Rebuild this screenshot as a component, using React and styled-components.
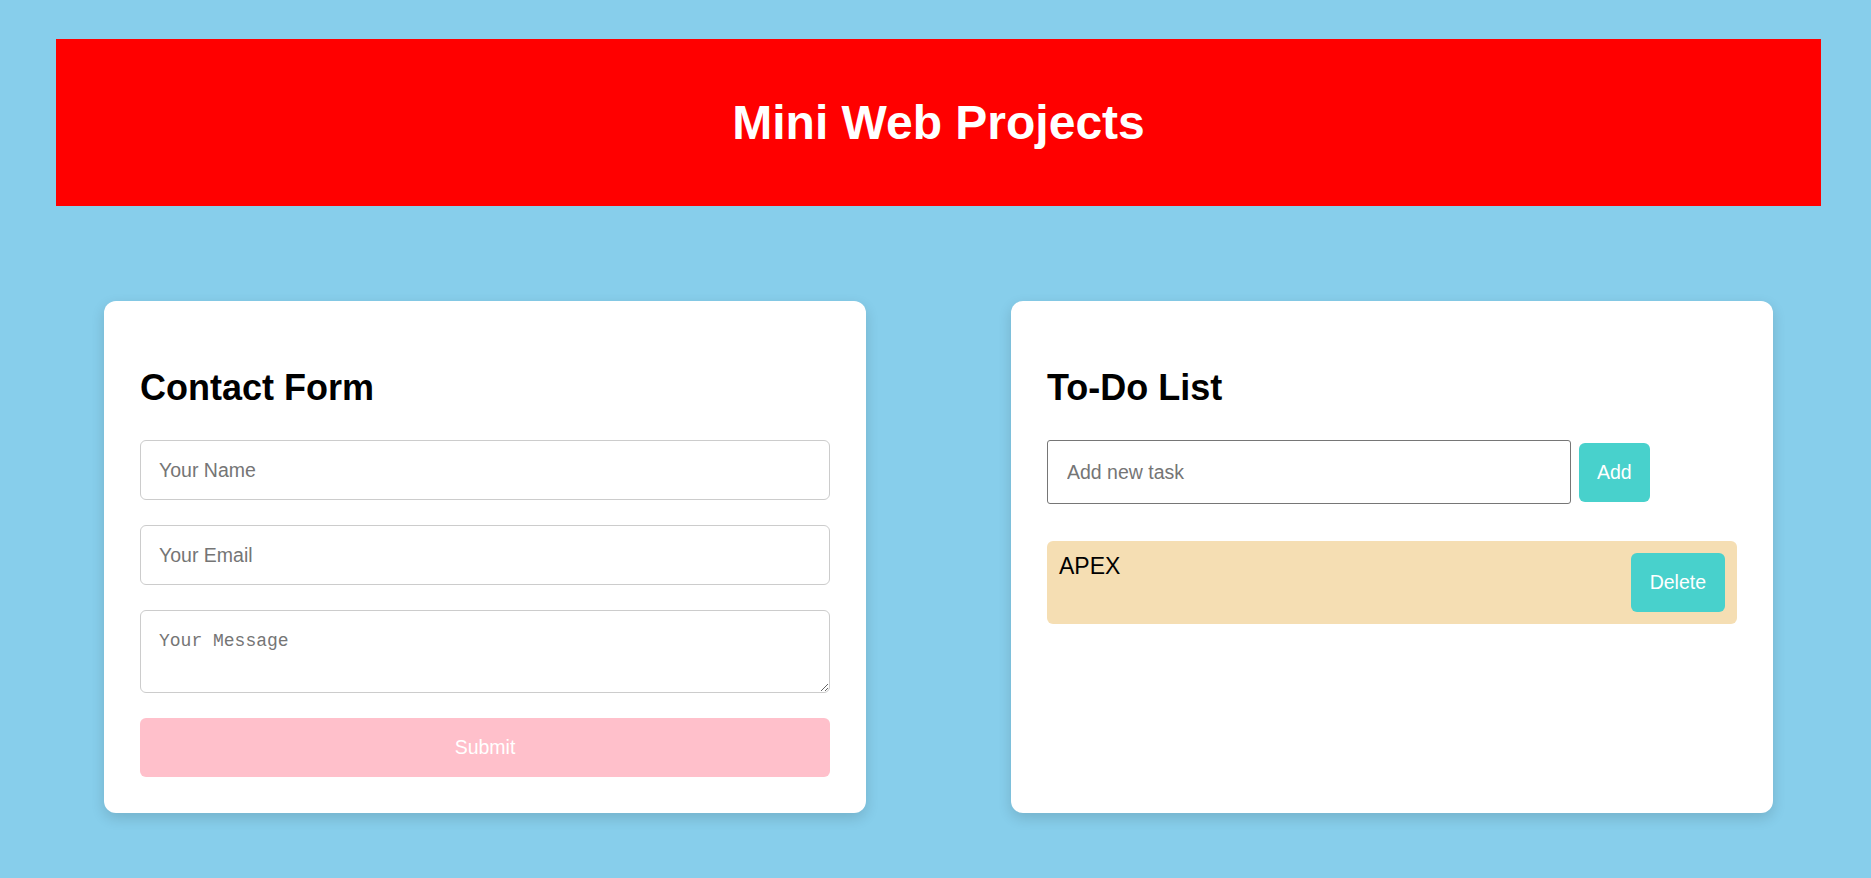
import React, { useState } from 'react';
import styled, { createGlobalStyle } from 'styled-components';

const GlobalStyle = createGlobalStyle`
    html, body {
        margin: 0;
        padding: 0;
        background: #87ceeb;
        font-family: "Liberation Sans", Arial, sans-serif;
    }
    * {
        box-sizing: border-box;
    }
`;

const Page = styled.div`
    min-height: 878px;
    padding-top: 39px;
`;

const Header = styled.header`
    margin: 0 50px 0 56px;
    height: 167px;
    background: #ff0000;
    display: flex;
    align-items: center;
    justify-content: center;
`;

const Title = styled.h1`
    margin: 0;
    color: #fff;
    font-size: 48px;
    font-weight: bold;
`;

const Projects = styled.main`
    display: grid;
    grid-template-columns: 762px 762px;
    column-gap: 145px;
    padding: 0 98px 0 104px;
    margin-top: 95px;
`;

const Card = styled.section`
    background: #fff;
    border-radius: 12px;
    padding: 36px;
    box-shadow: 0 5px 14px rgba(0, 0, 0, 0.14);
    display: flex;
    flex-direction: column;
`;

const CardTitle = styled.h2`
    margin: 30px 0 31px;
    font-size: 36px;
    font-weight: bold;
    color: #000;
`;

const Form = styled.form`
    display: flex;
    flex-direction: column;
    gap: 25px;
`;

const Field = styled.input`
    width: 100%;
    height: 60px;
    padding: 0 18px;
    border: 1px solid #ccc;
    border-radius: 6px;
    font-family: "Liberation Sans", Arial, sans-serif;
    font-size: 19.5px;
    outline: none;
    &::placeholder {
        color: #757575;
    }
`;

const Message = styled.textarea`
    width: 100%;
    height: 83px;
    padding: 20px 18px 16px;
    border: 1px solid #ccc;
    border-radius: 6px;
    font-family: "Liberation Mono", "DejaVu Sans Mono", monospace;
    font-size: 18px;
    outline: none;
    &::placeholder {
        color: #757575;
    }
`;

const Submit = styled.button`
    height: 59px;
    border: none;
    border-radius: 6px;
    background: #ffc0cb;
    color: #fff;
    font-family: "Liberation Sans", Arial, sans-serif;
    font-size: 19.5px;
`;

const AddRow = styled.div`
    display: flex;
    align-items: center;
    gap: 8px;
`;

const TaskInput = styled.input`
    width: 524px;
    height: 64px;
    padding: 0 19px;
    border: 1px solid #767676;
    border-radius: 3px;
    font-family: "Liberation Sans", Arial, sans-serif;
    font-size: 19.5px;
    outline: none;
    &::placeholder {
        color: #757575;
    }
`;

const ActionButton = styled.button`
    height: 59px;
    padding: 0 ${props => props.wide ? '19px' : '18px'};
    border: none;
    border-radius: 6px;
    background: #48d1cc;
    color: #fff;
    font-family: "Liberation Sans", Arial, sans-serif;
    font-size: 19.5px;
`;

const TaskList = styled.ul`
    list-style: none;
    margin: 37px 0 0;
    padding: 0;
`;

const Task = styled.li`
    display: flex;
    justify-content: space-between;
    align-items: flex-start;
    padding: 12px;
    background: #f5deb3;
    border-radius: 6px;
    font-size: 23px;
    color: #000;
`;

export default function App() {
    const [tasks] = useState(['APEX']);
    return (
        <Page>
            <GlobalStyle />
            <Header>
                <Title>Mini Web Projects</Title>
            </Header>
            <Projects>
                <Card>
                    <CardTitle>Contact Form</CardTitle>
                    <Form onSubmit={e => e.preventDefault()}>
                        <Field type="text" placeholder="Your Name" />
                        <Field type="email" placeholder="Your Email" />
                        <Message placeholder="Your Message" />
                        <Submit type="submit">Submit</Submit>
                    </Form>
                </Card>
                <Card>
                    <CardTitle>To-Do List</CardTitle>
                    <AddRow>
                        <TaskInput type="text" placeholder="Add new task" />
                        <ActionButton>Add</ActionButton>
                    </AddRow>
                    <TaskList>
                        {tasks.map(task => (
                            <Task key={task}>
                                <span>{task}</span>
                                <ActionButton wide>Delete</ActionButton>
                            </Task>
                        ))}
                    </TaskList>
                </Card>
            </Projects>
        </Page>
    );
}
